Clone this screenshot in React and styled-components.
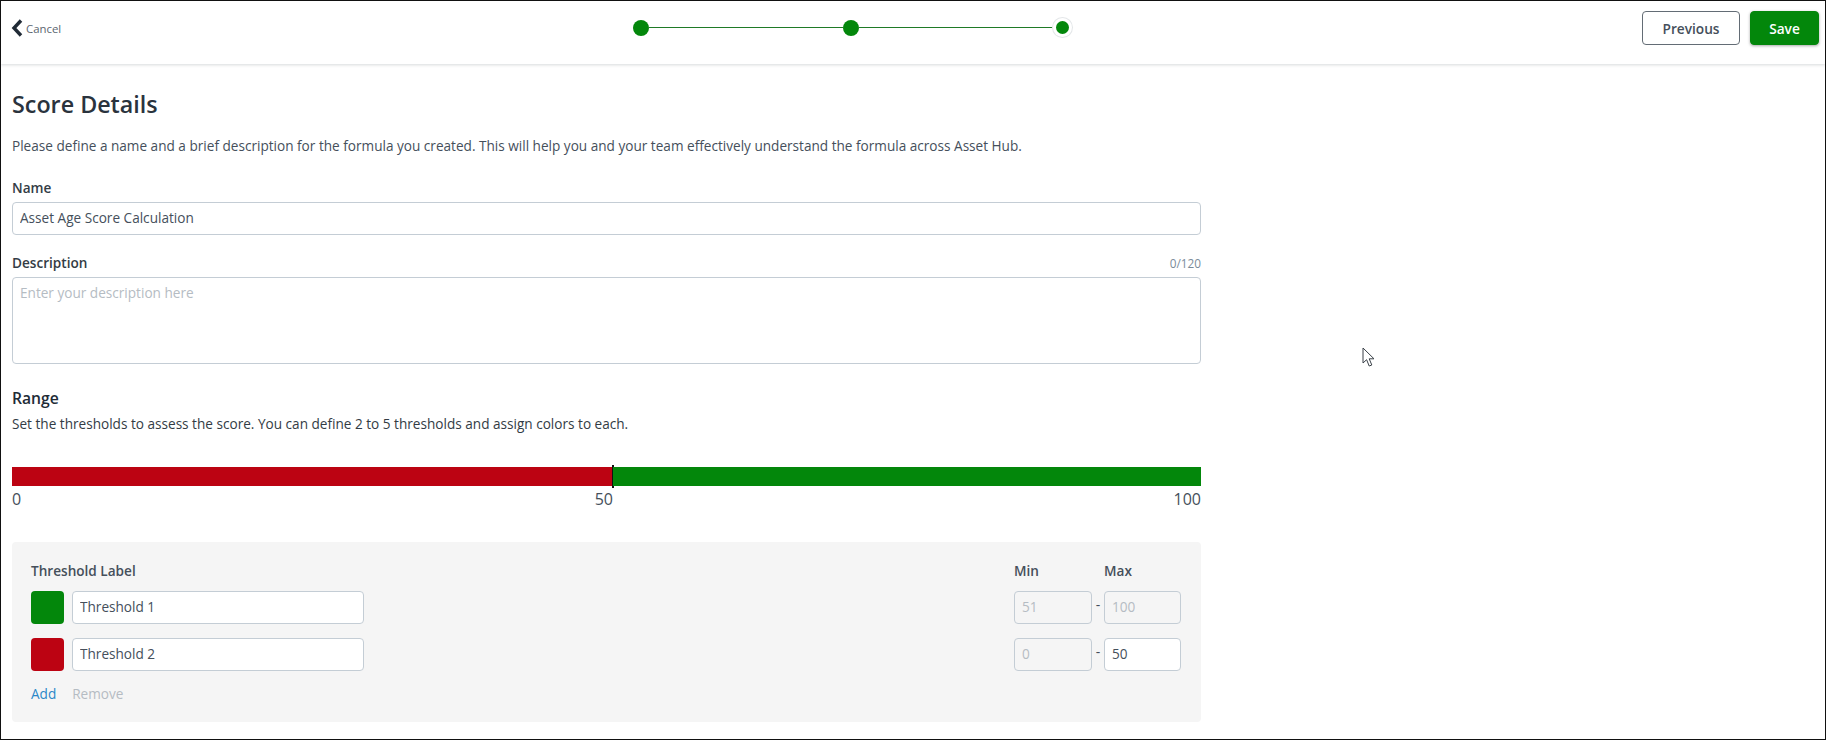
import React from "react";
import styled, { createGlobalStyle } from "styled-components";

const GlobalStyle = createGlobalStyle`
  html, body {
    margin: 0;
    padding: 0;
    background: #fff;
  }
  * {
    box-sizing: border-box;
  }
`;

const GREEN = "#03870b";
const RED = "#bc0312";

const Frame = styled.div`
  position: relative;
  width: 1826px;
  height: 740px;
  border: 1px solid #111;
  overflow: hidden;
  background: #fff;
  font-family: "Open Sans", "Noto Sans", sans-serif;
  color: #454f5b;
`;

// top bar

const Header = styled.header`
  height: 63px;
  display: flex;
  align-items: flex-start;
  padding: 0 6px 0 10px;
  box-shadow: 0 1px 3px rgba(33, 43, 54, 0.18);
`;

const CancelLink = styled.a`
  display: flex;
  align-items: center;
  gap: 3px;
  width: 622px;
  height: 54px;
  font-size: 11.4px;
  color: #5c6670;
`;

const Stepper = styled.div`
  display: flex;
  align-items: center;
  height: 53px;
`;

const StepDot = styled.span`
  width: ${(p) => (p.$current ? "13px" : "16px")};
  height: ${(p) => (p.$current ? "13px" : "16px")};
  margin: ${(p) => (p.$current ? "0 0 0 3px" : "0")};
  border-radius: 50%;
  background: ${GREEN};
  box-shadow: ${(p) =>
    p.$current ? "0 0 0 3px #fff, 0 0 0 4px #e4e7e9" : "none"};
`;

const StepLine = styled.span`
  width: 194px;
  height: 1px;
  background: #1f7a26;
`;

const Actions = styled.div`
  display: flex;
  gap: 10px;
  margin-left: auto;
  padding-top: 10px;
`;

const Button = styled.button`
  height: 34px;
  width: ${(p) => (p.$primary ? "69px" : "98px")};
  border-radius: 4px;
  border: 1px solid ${(p) => (p.$primary ? GREEN : "#636c75")};
  background: ${(p) => (p.$primary ? GREEN : "#fff")};
  color: ${(p) => (p.$primary ? "#fff" : "#454f5b")};
  font-family: inherit;
  font-size: 13.7px;
  font-weight: 600;
  box-shadow: ${(p) => (p.$primary ? "0 1px 3px rgba(0,0,0,0.35)" : "none")};
`;

// form

const Main = styled.main`
  width: 1200px;
  padding: 25px 0 0 11px;
`;

const Title = styled.h1`
  margin: 0;
  font-size: 23.3px;
  line-height: 30px;
  font-weight: 600;
  color: #2a333d;
`;

const Intro = styled.p`
  margin: 17px 0 22px;
  font-size: 13.6px;
  line-height: 20px;
  color: #454f5b;
`;

const LabelRow = styled.div`
  display: flex;
  align-items: flex-end;
  justify-content: space-between;
  height: 20px;
  margin: ${(p) => p.$margin || "0 0 4px"};
`;

const Label = styled.label`
  font-size: 13.6px;
  line-height: 20px;
  font-weight: 600;
  color: #333c45;
`;

const Counter = styled.span`
  font-size: 11.8px;
  line-height: 20px;
  color: #7a8b99;
`;

const TextInput = styled.input`
  display: block;
  width: ${(p) => p.$width || "100%"};
  height: 33px;
  padding: 0 0 2px 7px;
  border: 1px solid #c4cdd5;
  border-radius: 4px;
  outline: none;
  background: ${(p) => (p.disabled ? "#f5f5f5" : "#fff")};
  font-family: inherit;
  font-size: 13.6px;
  color: #454f5b;

  &:disabled {
    color: #b5bcc3;
    -webkit-text-fill-color: #b5bcc3;
    opacity: 1;
  }
`;

const TextArea = styled.textarea`
  display: block;
  width: 100%;
  height: 87px;
  padding: 5px 7px;
  border: 1px solid #c4cdd5;
  border-radius: 4px;
  outline: none;
  resize: none;
  font-family: inherit;
  font-size: 13.6px;
  line-height: 20px;

  &::placeholder {
    color: #b5bcc3;
    opacity: 1;
  }
`;

const SectionTitle = styled.h2`
  margin: 22px 0 4px;
  font-size: 15.7px;
  line-height: 24px;
  font-weight: 600;
  color: #212b36;
`;

const SectionText = styled.p`
  margin: 0 0 33px;
  font-size: 13.6px;
  line-height: 20px;
  color: #333c45;
`;

const RangeGrid = styled.div`
  display: grid;
  grid-template-columns: 601px 1fr;
  height: ${(p) => p.$height};
  margin-bottom: ${(p) => p.$bottom || "0"};
`;

const Segment = styled.div`
  position: relative;
  background: ${(p) => p.$color};
`;

const Marker = styled.span`
  position: absolute;
  top: -2px;
  right: -1px;
  width: 2px;
  height: 23px;
  background: #111;
`;

const ScaleCell = styled.div`
  display: flex;
  justify-content: ${(p) => (p.$end ? "flex-end" : "space-between")};
  font-size: 16px;
  line-height: 20px;
  color: #454f5b;
`;

const Panel = styled.section`
  height: 180px;
  padding: 19px 20px 0 19px;
  background: #f5f5f5;
  border-radius: 4px;
`;

const Row = styled.div`
  display: flex;
  align-items: center;
  justify-content: space-between;
  margin-bottom: ${(p) => p.$bottom || "14px"};
`;

const Group = styled.div`
  display: flex;
  align-items: center;
  gap: ${(p) => p.$gap || "8px"};
`;

const ColumnHead = styled.span`
  width: ${(p) => p.$width};
  font-size: 13.6px;
  line-height: 20px;
  font-weight: 600;
  color: #454f5b;
`;

const Swatch = styled.span`
  width: 33px;
  height: 33px;
  border-radius: 4px;
  background: ${(p) => p.$color};
`;

const Dash = styled.span`
  width: 12px;
  height: 33px;
  text-align: center;
  font-size: 14px;
  line-height: 28px;
  color: #454f5b;
`;

const PanelLink = styled.a`
  font-size: 13.6px;
  line-height: 20px;
  color: ${(p) => (p.$disabled ? "#b5bcc3" : "#2b87c8")};
`;

const CursorMark = styled.svg`
  position: absolute;
  left: 1361px;
  top: 346px;
`;

const thresholds = [
  { name: "Threshold 1", color: GREEN, min: "51", max: "100", locked: true },
  { name: "Threshold 2", color: RED, min: "0", max: "50", locked: false },
];

const App = () => {
  return (
    <>
      <GlobalStyle />
      <Frame>
        <Header>
          <CancelLink>
            <svg width="12" height="18" viewBox="0 0 12 18">
              <path
                d="M10 1.5 3 9l7 7.5"
                fill="none"
                stroke="#212b36"
                strokeWidth="3.4"
              />
            </svg>
            Cancel
          </CancelLink>
          <Stepper>
            <StepDot />
            <StepLine />
            <StepDot />
            <StepLine />
            <StepDot $current />
          </Stepper>
          <Actions>
            <Button>Previous</Button>
            <Button $primary>Save</Button>
          </Actions>
        </Header>

        <Main>
          <Title>Score Details</Title>
          <Intro>
            Please define a name and a brief description for the formula you
            created. This will help you and your team effectively understand the
            formula across Asset Hub.
          </Intro>

          <LabelRow>
            <Label>Name</Label>
          </LabelRow>
          <TextInput defaultValue="Asset Age Score Calculation" />

          <LabelRow $margin="18px 0 4px">
            <Label>Description</Label>
            <Counter>0/120</Counter>
          </LabelRow>
          <TextArea placeholder="Enter your description here" />

          <SectionTitle>Range</SectionTitle>
          <SectionText>
            Set the thresholds to assess the score. You can define 2 to 5
            thresholds and assign colors to each.
          </SectionText>

          <RangeGrid $height="19px" $bottom="3px">
            <Segment $color={RED}>
              <Marker />
            </Segment>
            <Segment $color={GREEN} />
          </RangeGrid>
          <RangeGrid $height="20px" $bottom="33px">
            <ScaleCell>
              <span>0</span>
              <span>50</span>
            </ScaleCell>
            <ScaleCell $end>
              <span>100</span>
            </ScaleCell>
          </RangeGrid>

          <Panel>
            <Row $bottom="10px">
              <ColumnHead $width="200px">Threshold Label</ColumnHead>
              <Group $gap="13px">
                <ColumnHead $width="77px">Min</ColumnHead>
                <ColumnHead $width="77px">Max</ColumnHead>
              </Group>
            </Row>
            {thresholds.map((t, i) => (
              <Row
                key={t.name}
                $bottom={i === thresholds.length - 1 ? "13px" : "14px"}
              >
                <Group>
                  <Swatch $color={t.color} />
                  <TextInput $width="292px" defaultValue={t.name} />
                </Group>
                <Group $gap="0">
                  <TextInput $width="78px" disabled defaultValue={t.min} />
                  <Dash>-</Dash>
                  <TextInput
                    $width="77px"
                    disabled={t.locked}
                    defaultValue={t.max}
                  />
                </Group>
              </Row>
            ))}
            <Group $gap="16px">
              <PanelLink>Add</PanelLink>
              <PanelLink $disabled>Remove</PanelLink>
            </Group>
          </Panel>
        </Main>

        <CursorMark width="14" height="21" viewBox="0 0 14 21">
          <path
            d="M1 1v15l3.6-3.3 2.6 6.3 2.6-1-2.6-6.2h4.8z"
            fill="#fff"
            stroke="#3a4148"
            strokeWidth="1"
          />
        </CursorMark>
      </Frame>
    </>
  );
};

export default App;
